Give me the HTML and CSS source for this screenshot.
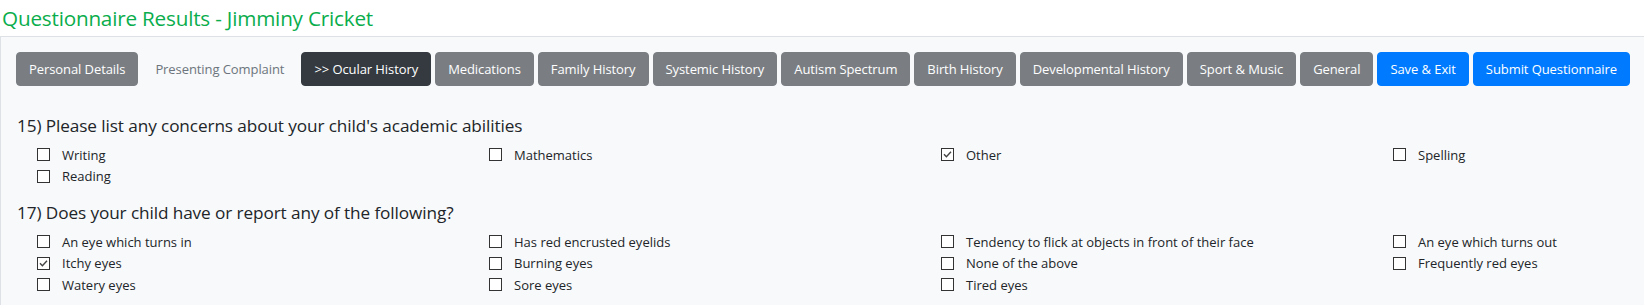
FILE: index.html
```html
<!DOCTYPE html>
<html lang="en">
<head>
    <meta charset="UTF-8">
    <meta name="viewport" content="width=device-width, initial-scale=1.0">
    <title>Questionnaire Results</title>
    <link rel="stylesheet" href="styles.css">
</head>
<body>
    <h1 class="page-title">Questionnaire Results - Jimminy Cricket</h1>

    <div class="results-panel">
        <div class="section-nav">
            <button class="btn btn-grey">Personal Details</button>
            <button class="btn btn-plain">Presenting Complaint</button>
            <button class="btn btn-dark">&gt;&gt; Ocular History</button>
            <button class="btn btn-grey">Medications</button>
            <button class="btn btn-grey">Family History</button>
            <button class="btn btn-grey">Systemic History</button>
            <button class="btn btn-grey">Autism Spectrum</button>
            <button class="btn btn-grey">Birth History</button>
            <button class="btn btn-grey">Developmental History</button>
            <button class="btn btn-grey">Sport &amp; Music</button>
            <button class="btn btn-grey">General</button>
            <button class="btn btn-blue">Save &amp; Exit</button>
            <button class="btn btn-blue">Submit Questionnaire</button>
        </div>

        <div class="question">
            <h2 class="question-title">15) Please list any concerns about your child's academic abilities</h2>
            <div class="options">
                <div class="option"><span class="box"></span>Writing</div>
                <div class="option"><span class="box"></span>Mathematics</div>
                <div class="option"><span class="box checked"></span>Other</div>
                <div class="option"><span class="box"></span>Spelling</div>
                <div class="option"><span class="box"></span>Reading</div>
            </div>
        </div>

        <div class="question">
            <h2 class="question-title">17) Does your child have or report any of the following?</h2>
            <div class="options">
                <div class="option"><span class="box"></span>An eye which turns in</div>
                <div class="option"><span class="box"></span>Has red encrusted eyelids</div>
                <div class="option"><span class="box"></span>Tendency to flick at objects in front of their face</div>
                <div class="option"><span class="box"></span>An eye which turns out</div>
                <div class="option"><span class="box checked"></span>Itchy eyes</div>
                <div class="option"><span class="box"></span>Burning eyes</div>
                <div class="option"><span class="box"></span>None of the above</div>
                <div class="option"><span class="box"></span>Frequently red eyes</div>
                <div class="option"><span class="box"></span>Watery eyes</div>
                <div class="option"><span class="box"></span>Sore eyes</div>
                <div class="option"><span class="box"></span>Tired eyes</div>
            </div>
        </div>
    </div>
</body>
</html>
```

FILE: styles.css
```css
body {
    margin: 0;
    font-family: "Open Sans", "Noto Sans", sans-serif;
    color: #212529;
    background-color: #ffffff;
    overflow: hidden;
}

.page-title {
    margin: 0;
    padding: 5px 0 4px 2px;
    font-size: 20.7px;
    font-weight: 400;
    line-height: 27px;
    color: #0aad4c;
    letter-spacing: -0.2px;
}

.results-panel {
    border-top: 1px solid #dee2e6;
    border-left: 1px solid #dee2e6;
    background-color: #f8f9fa;
    padding: 15px 0 20px 15px;
}

.section-nav {
    display: flex;
    gap: 4px;
    margin-bottom: 28px;
}

.btn {
    height: 34px;
    padding: 0 12px;
    border: 1px solid transparent;
    border-radius: 4px;
    font-family: inherit;
    font-size: 13px;
    letter-spacing: -0.08px;
    white-space: nowrap;
    color: #ffffff;
    cursor: pointer;
}

.btn-grey {
    background-color: #7a7e83;
    border-color: #7a7e83;
}

.btn-plain {
    background-color: transparent;
    color: #6c757d;
}

.btn-dark {
    background-color: #343a40;
    border-color: #343a40;
}

.btn-blue {
    background-color: #007bff;
    border-color: #007bff;
}

.question {
    margin-bottom: 14px;
}

.question-title {
    margin: 0 0 6px 1px;
    font-size: 17.2px;
    font-weight: 400;
    line-height: 24px;
    letter-spacing: -0.1px;
}

.options {
    display: grid;
    grid-template-columns: repeat(4, 452px);
    margin-left: 21px;
}

.option {
    display: flex;
    align-items: center;
    height: 21.5px;
    font-size: 13px;
    white-space: nowrap;
}

.box {
    width: 11px;
    height: 11px;
    margin-right: 12px;
    border: 1px solid #333333;
    background-color: #ffffff;
    flex-shrink: 0;
}

.box.checked {
    background-image: url("data:image/svg+xml,%3Csvg xmlns='http://www.w3.org/2000/svg' viewBox='0 0 11 11'%3E%3Cpath d='M2 5.3 L4.4 7.8 L9 2.8' fill='none' stroke='%23444' stroke-width='1.4'/%3E%3C/svg%3E");
}
```
